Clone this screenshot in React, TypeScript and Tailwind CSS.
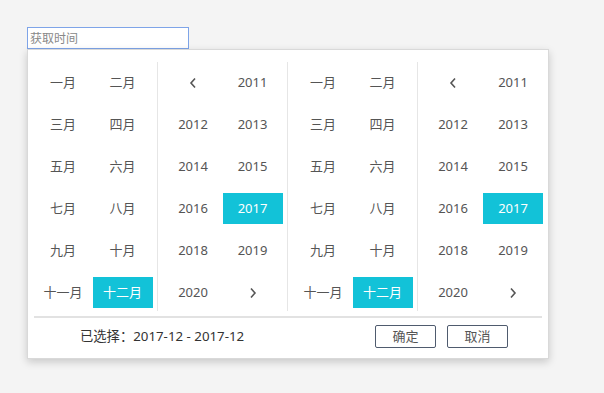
import { useState } from 'react'

const MONTHS = ['一月', '二月', '三月', '四月', '五月', '六月', '七月', '八月', '九月', '十月', '十一月', '十二月']
const YEARS = [2011, 2012, 2013, 2014, 2015, 2016, 2017, 2018, 2019, 2020]

const FONT = { fontFamily: '"Noto Sans", "Noto Sans CJK SC", sans-serif' }

function ChevronLeft() {
  return (
    <svg width="8" height="12" viewBox="0 0 8 12" fill="none">
      <path d="M6 1.5 L2 6 L6 10.5" stroke="#555" strokeWidth="1.6" />
    </svg>
  )
}

function ChevronRight() {
  return (
    <svg width="8" height="12" viewBox="0 0 8 12" fill="none">
      <path d="M2 1.5 L6 6 L2 10.5" stroke="#555" strokeWidth="1.6" />
    </svg>
  )
}

function Cell({ active, children }: { active?: boolean; children: React.ReactNode }) {
  return (
    <div
      className={`flex h-[31px] w-[60px] items-center justify-center text-[13px] cursor-pointer ${
        active ? 'bg-[#12c2d8] text-white' : 'text-[#555]'
      }`}
    >
      {children}
    </div>
  )
}

function MonthPanel({ selected }: { selected: number }) {
  return (
    <div className="w-[130px] border-r border-[#e6e6e6] px-[5px] pt-[5px] pb-[3px]">
      <div className="grid grid-cols-2 gap-y-[11px]">
        {MONTHS.map((m, i) => (
          <Cell key={m} active={i === selected}>
            {m}
          </Cell>
        ))}
      </div>
    </div>
  )
}

function YearPanel({ selected, last }: { selected: number; last?: boolean }) {
  return (
    <div className={`w-[130px] px-[5px] pt-[5px] pb-[3px] ${last ? '' : 'border-r border-[#e6e6e6]'}`}>
      <div className="grid grid-cols-2 gap-y-[11px]">
        <Cell>
          <ChevronLeft />
        </Cell>
        {YEARS.map((y) => (
          <Cell key={y} active={y === selected}>
            {y}
          </Cell>
        ))}
        <Cell>
          <ChevronRight />
        </Cell>
      </div>
    </div>
  )
}

export default function App() {
  const [value] = useState('')

  return (
    <div className="min-h-[393px] bg-[#f4f4f4] pl-[27px] pt-[27px]" style={FONT}>
      <input
        type="text"
        value={value}
        readOnly
        placeholder="获取时间"
        className="block h-[22px] w-[162px] border border-[#7ea4e8] bg-white px-[2px] text-[12px] text-[#333] placeholder-[#888] outline-none"
      />
      <div className="w-[522px] border border-[#d9d9d9] bg-white pt-[12px] pb-[10px] shadow-[0_3px_8px_rgba(0,0,0,0.18)]">
        <div className="flex">
          <MonthPanel selected={11} />
          <YearPanel selected={2017} />
          <MonthPanel selected={11} />
          <YearPanel selected={2017} last />
        </div>
        <div className="mx-[6px] mt-[5px] h-[2px] bg-[#e2e2e2]" />
        <div className="mt-[7px] flex items-center">
          <span className="pl-[52px] text-[13.3px] text-[#333]">已选择：2017-12 - 2017-12</span>
          <div className="ml-auto mr-[40px] flex gap-[11px]">
            <button className="h-[23px] w-[61px] rounded-[2px] border border-[#4f5b6e] bg-white text-[13px] text-[#555]">
              确定
            </button>
            <button className="h-[23px] w-[61px] rounded-[2px] border border-[#4f5b6e] bg-white text-[13px] text-[#555]">
              取消
            </button>
          </div>
        </div>
      </div>
    </div>
  )
}
